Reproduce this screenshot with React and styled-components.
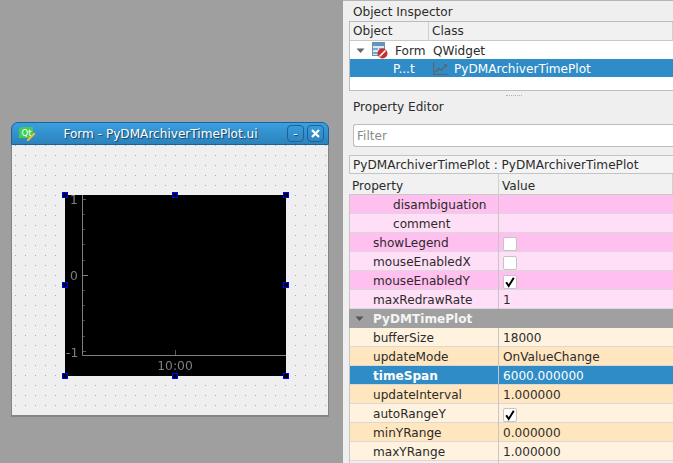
import React from "react";
import styled, { createGlobalStyle } from "styled-components";

const Global = createGlobalStyle`
  html, body { margin: 0; padding: 0; background: #efefef; }
  body { font-family: "DejaVu Sans", sans-serif; font-size: 12.1px; color: #2b2b2b; }
  * { box-sizing: border-box; }
`;
const Page = styled.div`display: flex; width: 673px; height: 463px; overflow: hidden;`;
const MdiArea = styled.div`flex: 0 0 343px; height: 463px; background: #9f9f9f; padding: 122px 14px 0 11px;`;
const FormWindow = styled.div`width: 318px; height: 295px; display: flex; flex-direction: column;`;
const TitleBar = styled.div`
  height: 23px; display: flex; align-items: center; padding: 0 4px 0 7px;
  border: 1px solid #1c6294; border-radius: 7px 7px 0 0;
  background: linear-gradient(#3a9fe0, #2c82bb); color: #fff; font-size: 12.1px;
  text-shadow: 1px 1px 1px #123f5f;
`;
const TitleText = styled.span`flex: 1; text-align: center; padding-left: 1px; white-space: nowrap;`;
const WinButton = styled.span`
  width: 17px; height: 17px; margin-left: 3px; display: flex; align-items: center; justify-content: center;
  border: 1px solid #1c6294; border-radius: 4px; color: #fff; background: transparent;
`;
const FormBody = styled.div`
  flex: 1; padding: 50px 43px 0 53px; background-color: #efefef;
  border: solid #858585; border-width: 0 1px 2px 1px;
  background-image: radial-gradient(circle at 0.5px 0.5px, #a8a8a8 0.55px, transparent 0.7px);
  background-size: 10px 10px; background-position: 3px 10px;
`;
const PlotFrame = styled.div`position: relative; width: 221px; height: 181px; background: #000;`;
const PlotSvg = styled.svg`display: block; will-change: transform;`;
const Handle = styled.span`
  position: absolute; width: 6px; height: 6px; border: 1px solid #0000ff; background: #000;
  left: ${(p) => p.$x}px; top: ${(p) => p.$y}px;
`;
const Side = styled.div`flex: 1; min-width: 0; padding-left: 6px; border-top: 1px solid #b5b5b5; display: flex; flex-direction: column;`;
const DockTitle = styled.div`height: 20px; padding: 3px 0 0 4px; line-height: 17px; white-space: nowrap;`;
const TreeBox = styled.div`height: 70px; border: 1px solid #bcbcbc; border-right: 0; background: #fff;`;
const TreeHead = styled.div`display: grid; grid-template-columns: 79px 1fr; height: 19px; background: #f1f1f1; border-bottom: 1px solid #c8c8c8; line-height: 19px;`;
const HeadCell = styled.div`padding-left: 3px; border-right: 1px solid #d0d0d0;`;
const TreeRow = styled.div`
  display: grid; grid-template-columns: 79px 1fr; height: 18px; line-height: 18px;
  background: ${(p) => (p.$sel ? "#308cc6" : "transparent")}; color: ${(p) => (p.$sel ? "#fff" : "inherit")};
`;
const TreeCell = styled.div`display: flex; align-items: center; gap: ${(p) => p.$gap || 0}px; padding-left: ${(p) => p.$pad || 0}px; white-space: nowrap;`;
const TreeLabel = styled.span`padding-top: 1px;`;
const Grip = styled.div`height: 9px; display: flex; justify-content: center; align-items: center; padding-left: 6px;`;
const GripDots = styled.span`width: 16px; border-top: 1px dotted #b0b0b0;`;
const SectionTitle = styled.div`height: 24px; padding: 0 0 0 4px; line-height: 14px;`;
const FilterBox = styled.div`
  height: 23px; margin: 0 0 8px 4px; border: 1px solid #bcbcbc; border-right: 0; border-radius: 3px 0 0 3px;
  background: #fff; color: #8a8a8a; padding-left: 3px; line-height: 23px;
`;
const ClassBar = styled.div`height: 19px; border: 1px solid #c4c4c4; border-right: 0; background: #f4f4f4; padding-left: 3px; line-height: 19px; white-space: nowrap;`;
const PropHead = styled.div`display: grid; grid-template-columns: 150px 1fr; height: 21px; line-height: 24px; background: #f1f1f1; border-bottom: 1px solid #c8c8c8;`;
const PropTable = styled.div`display: flex; flex-direction: column;`;
const palette = {
  pink: "#ffbfef", pinkLight: "#ffdff7", orange: "#ffe6bf", orangeLight: "#fff2df", sel: "#308cc6",
};
const PropRow = styled.div`
  display: grid; grid-template-columns: 150px 1fr; height: 19px; line-height: 21px;
  background: ${(p) => palette[p.$tone]}; border-bottom: 1px solid #d9d9d9;
  color: ${(p) => (p.$tone === "sel" ? "#fff" : "inherit")};
`;
const PropName = styled.div`
  padding-left: ${(p) => p.$indent}px; border-right: 1px solid #c6c6c6; white-space: nowrap;
  border-left: 1px solid #c6c6c6; font-weight: ${(p) => (p.$bold ? 700 : 400)};
`;
const PropValue = styled.div`padding-left: 4px; display: flex; align-items: center; white-space: nowrap;`;
const SectionRow = styled.div`
  height: 19px; display: flex; align-items: center; gap: 9px; padding-left: 6px; background: #a0a0a0;
  color: #f4f4f4; font-weight: 700; line-height: 19px;
`;
const SectionLabel = styled.span`padding-top: 2px;`;
const Check = styled.span`
  width: 14px; height: 14px; display: flex; align-items: center; justify-content: center;
  background: #fff; border: 1px solid #c4c4c4; border-radius: 2px;
`;

const Tri = ({ color }) => (
  <svg width="9" height="6" viewBox="0 0 9 6"><path d="M0.5 0.5H8.5L4.5 5Z" fill={color} /></svg>
);
const Tick = () => (
  <svg width="12" height="12" viewBox="0 0 12 12"><path d="M2.2 6.2L4.7 10L9.8 1.8" fill="none" stroke="#000" strokeWidth="2" /></svg>
);
const QtLogo = () => (
  <svg width="17" height="14" viewBox="0 0 17 14">
    <path d="M2 0H14V8L11 11H0V2Z" fill="#41cd52" />
    <text x="2.5" y="8.6" fontSize="8.5" fontFamily="DejaVu Sans" fill="#fff" style={{ textShadow: "none" }}>Qt</text>
    <path d="M8 12.5L15 5.5L16.5 7L9.5 14H8Z" fill="#f0c030" />
  </svg>
);
const FormIcon = () => (
  <svg width="16" height="17" viewBox="0 0 16 17">
    <rect x="0.5" y="0.5" width="12" height="13" fill="#dfe6ee" stroke="#6f8fad" />
    <rect x="1" y="1" width="11" height="3" fill="#5d95c4" />
    <path d="M1 6H6V8H1ZM7 6H12V8H7ZM1 10H6V12H1Z" fill="#7da7cc" />
    <circle cx="10.5" cy="11.5" r="5" fill="#c9302c" />
    <path d="M7.5 14.5L13.5 8.5" stroke="#fff" strokeWidth="1.6" />
  </svg>
);
const ChartIcon = () => (
  <svg width="15" height="13" viewBox="0 0 15 13">
    <path d="M0.5 0V12.5H15" fill="none" stroke="#5b6770" strokeWidth="1.4" />
    <path d="M2.5 10L6 6.5L8.5 8L13 3" fill="none" stroke="#5b6770" strokeWidth="1.6" />
    <path d="M10.5 2H14V5.5Z" fill="#5b6770" />
  </svg>
);
const CloseGlyph = () => (
  <svg width="9" height="9" viewBox="0 0 9 9"><path d="M1 1L8 8M8 1L1 8" stroke="#fff" strokeWidth="2.2" /></svg>
);

const tickRows = [
  [4.5, 21, "#5a5a5a"], [19.5, 20, "#444"], [34.5, 20, "#444"], [49.5, 20, "#444"], [65.5, 20, "#444"],
  [80.5, 23, "#808080"], [95.5, 20, "#444"], [110.5, 20, "#444"], [125.5, 20, "#444"], [141.5, 20, "#444"],
  [156.5, 21, "#5a5a5a"],
];
const PlotChart = () => (
  <PlotSvg width="221" height="181" viewBox="0 0 221 181">
    <path d="M17.5 0V160.5H221" fill="none" stroke="#808080" />
    {tickRows.map(([y, x2, c]) => <line key={y} x1="18" x2={x2} y1={y} y2={y} stroke={c} />)}
    <line x1="110.5" x2="110.5" y1="155" y2="160" stroke="#5a5a5a" />
    <g fill="#808080" fontFamily="DejaVu Sans" fontSize="12.3">
      <text x="5" y="9">1</text>
      <text x="5" y="85">0</text>
      <text x="1" y="162">-1</text>
      <text x="110" y="174.5" textAnchor="middle">10:00</text>
    </g>
  </PlotSvg>
);

const upper = [
  ["disambiguation", 43, "pink", ""],
  ["comment", 43, "pinkLight", ""],
  ["showLegend", 23, "pink", "off"],
  ["mouseEnabledX", 23, "pinkLight", "off"],
  ["mouseEnabledY", 23, "pink", "on"],
  ["maxRedrawRate", 23, "pinkLight", "1"],
];
const lower = [
  ["bufferSize", "orangeLight", "18000"],
  ["updateMode", "orange", "OnValueChange"],
  ["timeSpan", "sel", "6000.000000"],
  ["updateInterval", "orange", "1.000000"],
  ["autoRangeY", "orangeLight", "on"],
  ["minYRange", "orange", "0.000000"],
  ["maxYRange", "orangeLight", "1.000000"],
];
const renderValue = (v) =>
  v === "on" ? <Check><Tick /></Check> : v === "off" ? <Check /> : v;

export default function App() {
  const handles = [[-3, -3], [107, -3], [218, -3], [-3, 87], [218, 87], [-3, 178], [107, 178], [218, 178]];
  return (
    <Page>
      <Global />
      <MdiArea>
        <FormWindow>
          <TitleBar>
            <QtLogo />
            <TitleText>Form - PyDMArchiverTimePlot.ui</TitleText>
            <WinButton>-</WinButton>
            <WinButton><CloseGlyph /></WinButton>
          </TitleBar>
          <FormBody>
            <PlotFrame>
              <PlotChart />
              {handles.map(([x, y]) => <Handle key={`${x}-${y}`} $x={x} $y={y} />)}
            </PlotFrame>
          </FormBody>
        </FormWindow>
      </MdiArea>
      <Side>
        <DockTitle>Object Inspector</DockTitle>
        <TreeBox>
          <TreeHead>
            <HeadCell>Object</HeadCell>
            <HeadCell>Class</HeadCell>
          </TreeHead>
          <TreeRow>
            <TreeCell $pad={6} $gap={7}><Tri color="#666" /><FormIcon /><TreeLabel>Form</TreeLabel></TreeCell>
            <TreeCell $pad={4}><TreeLabel>QWidget</TreeLabel></TreeCell>
          </TreeRow>
          <TreeRow $sel>
            <TreeCell $pad={43}><TreeLabel>P...t</TreeLabel></TreeCell>
            <TreeCell $pad={4} $gap={6}><ChartIcon /><TreeLabel>PyDMArchiverTimePlot</TreeLabel></TreeCell>
          </TreeRow>
        </TreeBox>
        <Grip><GripDots /></Grip>
        <SectionTitle>Property Editor</SectionTitle>
        <FilterBox>Filter</FilterBox>
        <ClassBar>PyDMArchiverTimePlot : PyDMArchiverTimePlot</ClassBar>
        <PropHead>
          <HeadCell>Property</HeadCell>
          <HeadCell>Value</HeadCell>
        </PropHead>
        <PropTable>
          {upper.map(([n, ind, tone, v]) => (
            <PropRow key={n} $tone={tone}>
              <PropName $indent={ind}>{n}</PropName>
              <PropValue>{renderValue(v)}</PropValue>
            </PropRow>
          ))}
          <SectionRow><Tri color="#555" /><SectionLabel>PyDMTimePlot</SectionLabel></SectionRow>
          {lower.map(([n, tone, v]) => (
            <PropRow key={n} $tone={tone}>
              <PropName $indent={23} $bold={tone === "sel"}>{n}</PropName>
              <PropValue>{renderValue(v)}</PropValue>
            </PropRow>
          ))}
        </PropTable>
      </Side>
    </Page>
  );
}
